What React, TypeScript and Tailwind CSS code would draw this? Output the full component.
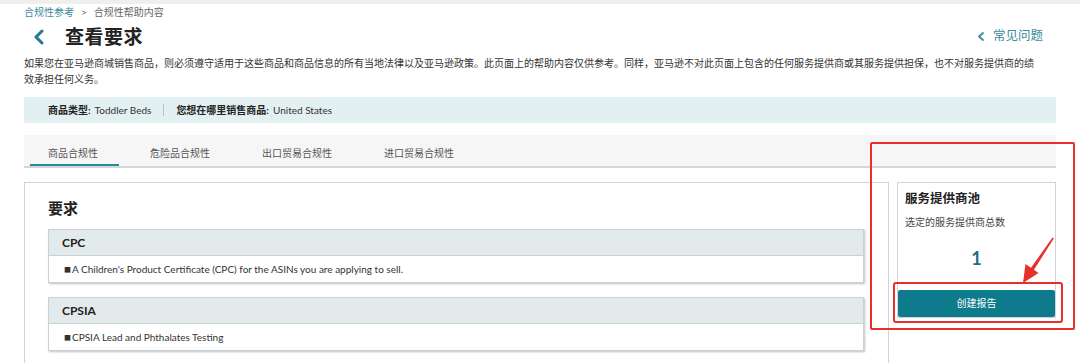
import React from "react";

const FONT = { fontFamily: 'Lato, "Noto Sans CJK SC", "Noto Sans", sans-serif' };

function Card({ title, text }: { title: string; text: string }) {
  return (
    <div className="border border-[#c9d1d3] shadow-[1px_1px_2px_rgba(0,0,0,0.25)]">
      <div className="h-[26px] bg-[#e3eaec] border-b border-[#c9d1d3] pl-[13px] flex items-center text-[12px] font-bold text-[#222]">
        {title}
      </div>
      <div className="h-[26px] bg-white pl-[15px] flex items-center text-[10px] text-[#333]">
        <span className="text-[7px] mr-[1px] text-[#333]">■</span>
        {text}
      </div>
    </div>
  );
}

export default function App() {
  const tabs = ["商品合规性", "危险品合规性", "出口贸易合规性", "进口贸易合规性"];
  return (
    <div className="relative w-[1080px] h-[363px] overflow-hidden bg-white" style={FONT}>
      <div className="h-[4px] bg-[#efefef]" />
      <div className="pl-[24px] pr-[24px]">
        {/* breadcrumb */}
        <div className="h-[15px] flex items-center text-[10px] leading-[14px]">
          <span className="text-[#3a8c9c]">合规性参考</span>
          <span className="mx-[7px] text-[#666] text-[10px]">&gt;</span>
          <span className="text-[#666]">合规性帮助内容</span>
        </div>
        {/* title row */}
        <div className="mt-[5px] h-[26px] flex items-center justify-between">
          <div className="flex items-center">
            <svg width="12" height="16" viewBox="0 0 12 16" className="ml-[9px]">
              <polyline points="9,2 3,8 9,14" fill="none" stroke="#1f7a8c" strokeWidth="3" strokeLinecap="round" strokeLinejoin="round" />
            </svg>
            <span className="ml-[20px] text-[19px] font-bold text-[#232323] tracking-[0.5px]">查看要求</span>
          </div>
          <div className="flex items-center mr-[13px] -mt-[2px]">
            <svg width="8" height="9" viewBox="0 0 8 9" className="mr-[8px]">
              <polyline points="6,1 2,4.5 6,8" fill="none" stroke="#3a8c9c" strokeWidth="1.8" strokeLinecap="round" strokeLinejoin="round" />
            </svg>
            <span className="text-[12.5px] text-[#3a8c9c]">常见问题</span>
          </div>
        </div>
        {/* description */}
        <div className="mt-[5px] text-[10px] leading-[16px] text-[#333]">
          <div className="whitespace-nowrap">
            如果您在亚马逊商城销售商品，则必须遵守适用于这些商品和商品信息的所有当地法律以及亚马逊政策。此页面上的帮助内容仅供参考。同样，亚马逊不对此页面上包含的任何服务提供商或其服务提供担保，也不对服务提供商的绩
          </div>
          <div>效承担任何义务。</div>
        </div>
        {/* info bar */}
        <div className="mt-[10px] h-[26px] bg-[#e3f0f2] flex items-center pl-[24px] text-[10px] text-[#333]">
          <span className="font-bold text-[#222]">商品类型:</span>
          <span className="ml-[4px]">Toddler Beds</span>
          <span className="mx-[12px] w-px h-[12px] bg-[#b9c4c6]" />
          <span className="font-bold text-[#222]">您想在哪里销售商品:</span>
          <span className="ml-[4px]">United States</span>
        </div>
        {/* tabs */}
        <div className="mt-[12px] h-[33px] bg-[#f6f6f6] border-b-2 border-[#d6d6d6] flex pl-[6px] gap-[13px]">
          {tabs.map((t, i) => (
            <div
              key={t}
              className={
                "h-[31px] pl-[18px] pr-[21px] pt-[11px] text-[10px] leading-[14px] text-[#555] " +
                (i === 0 ? "border-b-2 border-[#2a8a9a]" : "")
              }
            >
              {t}
            </div>
          ))}
        </div>
        {/* content row */}
        <div className="mt-[14px] flex gap-[8px] items-start">
          <div className="w-[865px] h-[200px] border border-[#d3d3d3] pt-[15px] pl-[23px] pr-[24px]">
            <div className="text-[15px] leading-[20px] font-bold text-[#222]">要求</div>
            <div className="mt-[11px] flex flex-col gap-[14px]">
              <Card title="CPC" text="A Children's Product Certificate (CPC) for the ASINs you are applying to sell." />
              <Card title="CPSIA" text="CPSIA Lead and Phthalates Testing" />
            </div>
          </div>
          <div className="w-[159px] border border-[#d3d3d3] flex flex-col">
            <div className="pl-[7px] pt-[7px]">
              <div className="text-[12.5px] leading-[18px] font-bold text-[#222]">服务提供商池</div>
              <div className="mt-[7px] text-[10px] leading-[14px] text-[#444]">选定的服务提供商总数</div>
            </div>
            <div className="mt-[17px] text-center text-[18px] leading-[24px] font-bold text-[#1f6f80]">1</div>
            <div className="mt-[20px] h-[27px] bg-[#0d7b8b] rounded-[2px] flex items-center justify-center text-[10px] text-white">
              创建报告
            </div>
          </div>
        </div>
      </div>

      {/* red annotations */}
      <div className="absolute left-[870px] top-[142px] w-[205px] h-[188px] border-2 border-[#e8302a] rounded-[2px]" />
      <div className="absolute left-[893px] top-[282px] w-[170px] h-[41px] border-2 border-[#e8302a] rounded-[3px]" />
      <svg className="absolute left-0 top-0" width="1080" height="363" viewBox="0 0 1080 363">
        <polygon points="1052.5,237.5 1053.8,238.5 1033.5,270.5 1030.5,268.5" fill="#e8302a" />
        <polygon points="1023,283 1025.5,264 1038.5,273" fill="#e8302a" />
      </svg>
    </div>
  );
}
